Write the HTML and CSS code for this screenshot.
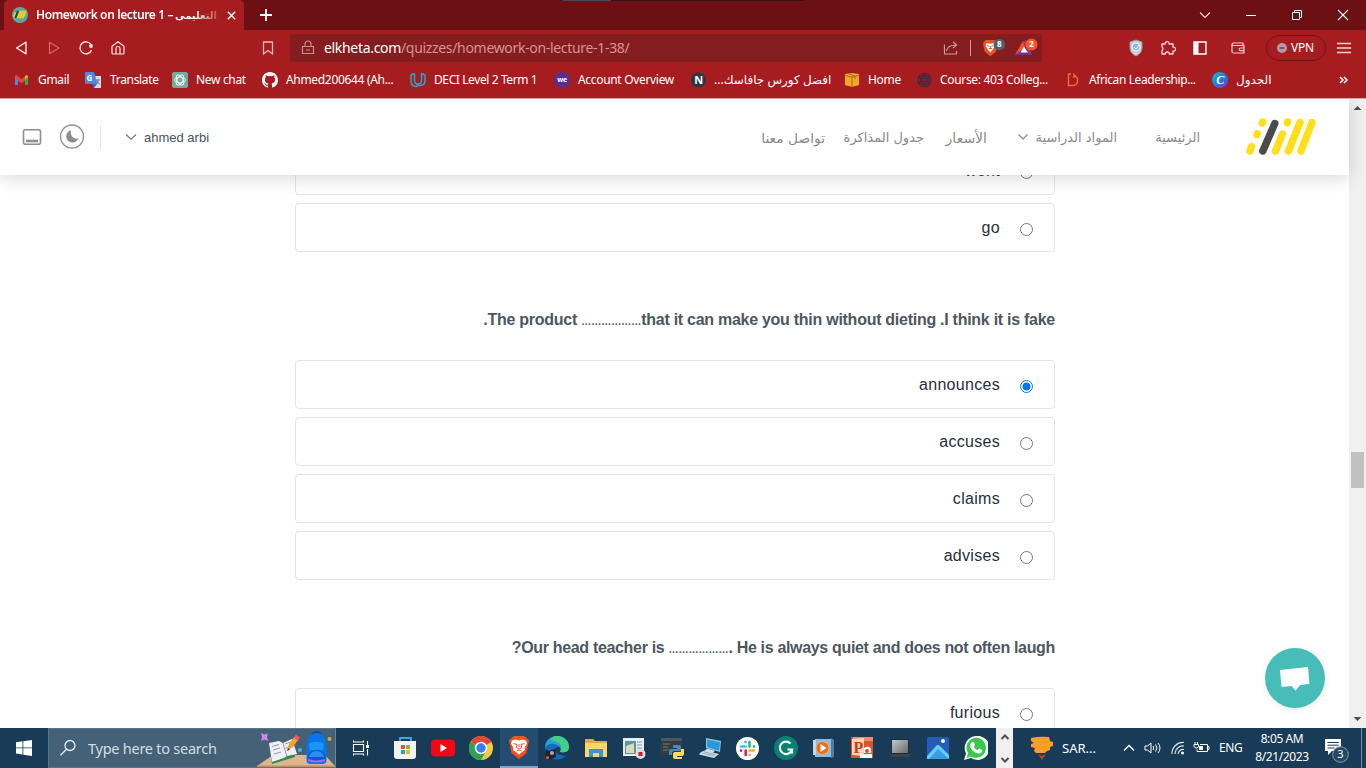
FILE: index.html
```html
<!DOCTYPE html>
<html lang="en">
<head>
<meta charset="utf-8">
<title>Homework on lecture 1</title>
<link rel="stylesheet" href="styles.css">
</head>
<body>
<div class="titlebar">
  <div class="tab">
    <svg width="16" height="16" viewBox="0 0 16 16"><circle cx="8" cy="8" r="8" fill="#58aaa0"/><g stroke-width="2" stroke-linecap="round"><path d="M3 6.500L2 9M8.500 4.500l-2.600 6M11 4.500l-2.600 6M13.500 4.500l-2.600 6" stroke="#e9d32b"/><path d="M5.800 4.500L3.800 10" stroke="#373b32"/></g></svg>
    <span class="tab-title">Homework on lecture 1 – <bdi class="tab-ar">التعليمى</bdi></span>
    <svg class="tab-close" width="9" height="9" viewBox="0 0 9 9"><path d="M.8.8l7.400 7.400M8.200.8L.8 8.200" stroke="#fff" stroke-width="1.400"/></svg>
  </div>
  <svg class="plus" width="12" height="12" viewBox="0 0 12 12"><path d="M6 0v12M0 6h12" stroke="#fff" stroke-width="1.800"/></svg>
  <div class="strip"></div>
  <div class="winbtns">
    <svg width="12" height="12" viewBox="0 0 12 12"><path d="M1 3.500l5 5 5-5" fill="none" stroke="#f0dcdc" stroke-width="1.100"/></svg>
    <svg width="12" height="12" viewBox="0 0 12 12"><path d="M1 6.500h10" stroke="#fff"/></svg>
    <svg width="12" height="12" viewBox="0 0 12 12"><path d="M1.500 3.500h7v7h-7zM3.500 3.500v-2h7v7h-2" fill="none" stroke="#fff"/></svg>
    <svg width="12" height="12" viewBox="0 0 12 12"><path d="M1 1l10 10M11 1L1 11" stroke="#fff" stroke-width="1.100"/></svg>
  </div>
</div>

<div class="toolbar">
  <span class="slot"><svg width="16" height="16" viewBox="0 0 16 16"><path d="M12 2.200v11.600L2.600 8z" fill="none" stroke="#f8e4e4" stroke-width="1.400" stroke-linejoin="round"/></svg></span>
  <span class="slot"><svg width="16" height="16" viewBox="0 0 16 16"><path d="M3.500 2.200v11.600L13 8z" fill="none" stroke="#d4686b" stroke-width="1.200" stroke-linejoin="round"/></svg></span>
  <span class="slot"><svg width="16" height="16" viewBox="0 0 16 16"><path d="M13 4.500A6 6 0 1 0 13.600 10" fill="none" stroke="#f8e4e4" stroke-width="1.400"/><circle cx="13" cy="6" r="1.900" fill="#f8e4e4"/></svg></span>
  <span class="slot"><svg width="16" height="16" viewBox="0 0 16 16"><path d="M2 6.200L8 1.800l6 4.400V13a1 1 0 0 1-1 1H3a1 1 0 0 1-1-1zM6 14V8.500a2 2 0 0 1 4 0V14" fill="none" stroke="#f8e4e4" stroke-width="1.200"/></svg></span>
  <span class="slot bm"><svg width="16" height="16" viewBox="0 0 16 16"><path d="M3.500 2h9v12L8 10.500 3.500 14z" fill="none" stroke="#efb9ba" stroke-width="1.300" stroke-linejoin="round"/></svg></span>
  <div class="address">
    <svg width="14" height="16" viewBox="0 0 14 16"><path d="M1.500 6.500h11v7h-11zM4 6.500V4a3 3 0 0 1 6 0v2.500M5 10h4" fill="none" stroke="#c28f90" stroke-width="1.200"/></svg>
    <span class="url">elkheta.com<span class="path">/quizzes/homework-on-lecture-1-38/</span></span>
    <svg class="share" width="16" height="16" viewBox="0 0 16 16"><path d="M1.500 4.500v9.500h12v-3M3.500 11c.8-4 3.500-6 9.500-6M10 1.800L13.500 5 10 8" fill="none" stroke="#c99a9b" stroke-width="1.200"/></svg>
    <i class="sep"></i>
    <svg class="lion" width="24" height="20" viewBox="0 0 24 20"><path d="M3.500 2h9l3 2.500-1.500 9-5.700 4.700-5.800-4.700L1 5z" fill="#f0501f"/><path d="M4.500 5l3 .8h1.400l3-.8 1 2.400-2 4-2.600 2.800L5.600 11.400l-2-4z" fill="#fff"/><path d="M5 7.500l2 .8M11.300 7.500l-2 .8M6.800 10.500h3M8.300 8v2" stroke="#f0501f"/><circle cx="17.300" cy="6.500" r="5.800" fill="#4f616d"/><text x="17.300" y="9" text-anchor="middle" class="badge">8</text></svg>
    <svg class="bat" width="25" height="20" viewBox="0 0 25 20"><path d="M8 3L0 17h6l4-8z" fill="#f4532b"/><path d="M0 17h17l-3-5H7z" fill="#63329e"/><path d="M8 3l3-.5L17 17l-4-3z" fill="#983b78"/><path d="M9 8.500l4 6H5.500z" fill="#fff"/><circle cx="16.500" cy="6.500" r="6" fill="#fb542b"/><text x="16.500" y="9" text-anchor="middle" class="badge">2</text></svg>
  </div>
  <span class="slot shield"><svg width="16" height="18" viewBox="0 0 16 18"><path d="M8 1l6 2v6c0 4-3 6.500-6 8-3-1.500-6-4-6-8V3z" fill="#c9d2d8" stroke="#8a979f"/><circle cx="8" cy="8" r="4" fill="#8fb4cf" stroke="#eef4f8"/><path d="M6 8l2 2 3-4" fill="none" stroke="#fff"/></svg></span>
  <span class="slot"><svg width="16" height="16" viewBox="0 0 16 16"><path d="M2 4h3.200a2 2 0 1 1 3.900 0H13v3.200a2 2 0 1 1 0 3.800v3H9.300a2 2 0 0 0-4 0H2v-3.500a2 2 0 0 0 0-3.500z" fill="none" stroke="#f4d9da" stroke-width="1.300" stroke-linejoin="round"/></svg></span>
  <span class="slot"><svg width="16" height="16" viewBox="0 0 16 16"><path d="M2 2h12v12H2z" fill="none" stroke="#fff" stroke-width="1.400"/><path d="M2 2h4.500v12H2z" fill="#fff"/></svg></span>
  <span class="slot wallet"><svg width="16" height="16" viewBox="0 0 16 16"><path d="M13 5.500V3H3.500a1.500 1.500 0 0 0-1.500 1.300v7.200A1.500 1.500 0 0 0 3.500 13H14V5.500H3.500A1.500 1.500 0 0 1 2 4.300M14 8h-3.500a1.300 1.300 0 0 0 0 2.600H14" fill="none" stroke="#f2cdce" stroke-width="1.200"/></svg></span>
  <div class="vpn"><svg width="10" height="10" viewBox="0 0 10 10"><circle cx="5" cy="5" r="5" fill="#b49ba9"/><path d="M2.500 5h5" stroke="#69455b" stroke-width="1.500"/></svg><span>VPN</span></div>
  <span class="slot menu"><svg width="14" height="14" viewBox="0 0 14 14"><path d="M0 2.500h14M0 7h14M0 11.500h14" stroke="#f2d9da" stroke-width="1.300"/></svg></span>
</div>

<div class="bookmarks">
  <div class="b"><svg width="16" height="16" viewBox="0 0 16 16"><path d="M1 3.500L2.500 3l5 4 5-4 1.500.5v3l-6.500 5L1 6.500z" fill="#e94435"/><path d="M1 5v8h3V7.500z" fill="#4f83e8"/><path d="M11 7.500V13h3V5z" fill="#35a653"/><path d="M11 7.500V4.500l1.500-1.500L14 4.500V5z" fill="#f4b912"/></svg><span>Gmail</span></div>
  <div class="b"><svg width="17" height="16" viewBox="0 0 17 16"><path d="M7 4h9v12H9z" fill="#d9dbe0"/><path d="M0 0h9l3.500 12H1a1 1 0 0 1-1-1z" fill="#4a86e8"/><path d="M7 12h5l-3 4z" fill="#3367c8"/><text x="1.500" y="9" class="ic8">G</text><path d="M11 8h4M13 7v1c0 2-1 4-2 4M12 9l3 3.500" stroke="#667" fill="none" stroke-width=".8"/></svg><span>Translate</span></div>
  <div class="b"><svg width="16" height="16" viewBox="0 0 16 16"><rect width="16" height="16" rx="2" fill="#74aa9c"/><g fill="none" stroke="#e8f6f2" stroke-width=".9"><ellipse cx="8" cy="8" rx="5.500" ry="2.800"/><ellipse cx="8" cy="8" rx="5.500" ry="2.800" transform="rotate(60 8 8)"/><ellipse cx="8" cy="8" rx="5.500" ry="2.800" transform="rotate(120 8 8)"/></g></svg><span>New chat</span></div>
  <div class="b"><svg width="16" height="16" viewBox="0 0 16 16"><path fill="#fff" d="M8 0C3.580 0 0 3.580 0 8c0 3.540 2.290 6.530 5.470 7.590.4.070.55-.17.55-.38v-1.490c-2.230.48-2.700-.94-2.700-.94-.36-.92-.89-1.170-.89-1.170-.73-.5.050-.49.050-.49.810.060 1.230.83 1.230.83.720 1.230 1.880.87 2.340.67.070-.52.28-.87.510-1.070-1.780-.2-3.640-.89-3.640-3.950 0-.87.310-1.590.82-2.150-.080-.2-.36-1.020.080-2.120 0 0 .67-.21 2.200.82a7.600 7.600 0 0 1 4 0c1.530-1.040 2.200-.82 2.200-.82.440 1.100.16 1.920.080 2.120.51.560.82 1.270.82 2.150 0 3.070-1.870 3.750-3.650 3.950.29.250.54.730.54 1.480v2.190c0 .21.150.46.550.38A8 8 0 0 0 16 8c0-4.420-3.580-8-8-8z"/></svg><span>Ahmed200644 (Ah...</span></div>
  <div class="b"><svg width="16" height="16" viewBox="0 0 16 16"><path d="M4.500 1.500L1 3v5.500c0 3.500 1.500 5.800 4.500 6 1 0 1.800-.3 2.500-1M4.500 1.500v7c0 2 1.300 3.500 3.500 3.500s3.500-1.500 3.500-3.500v-7L15 3v5.500c0 3.500-2.500 5-5 5S6.500 12 6.500 12" fill="none" stroke="#26a5cf" stroke-width="1.500" stroke-linejoin="round"/></svg><span class="t5">DECI Level 2 Term 1</span></div>
  <div class="b"><svg width="16" height="16" viewBox="0 0 16 16"><circle cx="8" cy="8" r="8" fill="#5a2d91"/><text x="8" y="10.300" text-anchor="middle" class="ic7">we</text></svg><span>Account Overview</span></div>
  <div class="b"><svg width="15" height="16" viewBox="0 0 15 16"><circle cx="7.500" cy="8" r="7.500" fill="#273948"/><text x="7.500" y="12" text-anchor="middle" class="ic11">N</text></svg><bdi class="ar" dir="rtl">افضل كورس جافاسك...</bdi></div>
  <div class="b"><svg width="15" height="16" viewBox="0 0 15 16"><path d="M0 2l7-1 7 1v11l-7 2-7-2z" fill="#f3a62b"/><path d="M0 3.500l7 1.500 7-1.500M7 5v10M3 1.500l7 2.500v3" fill="none" stroke="#a76512" stroke-width=".9"/></svg><span>Home</span></div>
  <div class="b"><svg width="15" height="16" viewBox="0 0 16 16"><g stroke="#3a2a4a" stroke-width="1.300" fill="none"><circle cx="8" cy="8" r="7"/><circle cx="8" cy="8" r="2.200"/><circle cx="8" cy="8" r="4.600"/><path d="M8 1v4.500M8 10.500V15M2 4.500l4 2.300M10 9.200l4 2.300M2 11.500l4-2.300M10 6.800l4-2.300"/></g></svg><span>Course: 403 Colleg...</span></div>
  <div class="b"><svg width="15" height="16" viewBox="0 0 15 16"><path d="M5 2H2.500v11.500H7c3.500 0 4.500-1.500 4.500-4.500V6.500L8 2.500V6" fill="none" stroke="#fa653e" stroke-width="1.400"/></svg><span class="t10">African Leadership...</span></div>
  <div class="b"><svg width="16" height="16" viewBox="0 0 16 16"><defs><linearGradient id="cv" x1="0" y1="0" x2="1" y2="1"><stop offset="0" stop-color="#07bfd0"/><stop offset=".5" stop-color="#247de0"/><stop offset="1" stop-color="#7430dc"/></linearGradient></defs><circle cx="8" cy="8" r="8" fill="url(#cv)"/><text x="8" y="12.300" text-anchor="middle" class="canva">C</text></svg><bdi class="ar">الجدول</bdi></div>
  <svg class="more" width="9" height="8" viewBox="0 0 9 8"><path d="M1 1l3 3-3 3M5 1l3 3-3 3" fill="none" stroke="#fff" stroke-width="1.500"/></svg>
</div>

<div class="viewport">
  <header class="site-header">
    <svg width="20" height="18" viewBox="0 0 20 18"><rect x="1.500" y="1.700" width="17" height="14.500" rx="2" fill="none" stroke="#8e8e8e" stroke-width="1.600"/><path d="M4 13h12" stroke="#8e8e8e" stroke-width="2.600"/></svg>
    <svg class="moon" width="26" height="26" viewBox="0 0 26 26"><circle cx="13" cy="12.500" r="11.500" fill="none" stroke="#929292" stroke-width="1.400"/><path d="M12 6.300a6.200 6.200 0 1 0 7.300 8c-2 .8-4.300.3-5.700-1.200-1.600-1.700-2.200-4.300-1.600-6.800z" fill="#8e8e8e"/></svg>
    <i class="vline"></i>
    <svg class="chev" width="12" height="8" viewBox="0 0 12 8"><path d="M1 1.500l5 4.700 5-4.700" fill="none" stroke="#777" stroke-width="1.200"/></svg>
    <span class="user">ahmed arbi</span>
    <nav class="nav" dir="rtl">
      <svg class="logo" width="72" height="40" viewBox="0 0 72 40"><g stroke-width="7.400" stroke-linecap="round" stroke="#fedf19"><path d="M57 34L68 5.500M44.500 34L56 5.500M31.500 34L38.500 17M43.200 5.800l.4-1M6 34l1.600-4.500M13 17.700l.4-1M18.300 6l.4-1"/><path d="M18.800 34L30.800 6.500" stroke="#4b4b4b"/></g></svg>
      <a class="n1">الرئيسية</a>
      <a class="n2">المواد الدراسية</a>
      <svg class="navchev" width="12" height="8" viewBox="0 0 12 8"><path d="M1.500 1.500L6 6l4.500-4.500" fill="none" stroke="#888" stroke-width="1.200"/></svg>
      <a class="n3">الأسعار</a>
      <a class="n4">جدول المذاكرة</a>
      <a class="n5">تواصل معنا</a>
    </nav>
  </header>
  <main class="quiz" dir="rtl">
    <label class="option"><i class="radio"></i><span>went</span></label>
    <label class="option"><i class="radio"></i><span>go</span></label>
    <h3 class="question q1">The product <span class="dots">………………</span>that it can make you thin without dieting .I think it is fake.</h3>
    <label class="option"><i class="radio on"></i><span>announces</span></label>
    <label class="option"><i class="radio"></i><span>accuses</span></label>
    <label class="option"><i class="radio"></i><span>claims</span></label>
    <label class="option"><i class="radio"></i><span>advises</span></label>
    <h3 class="question q2">Our head teacher is <span class="dots">………………</span>. He is always quiet and does not often laugh?</h3>
    <label class="option"><i class="radio"></i><span>furious</span></label>
  </main>
  <div class="scrollbar">
    <svg width="17" height="17" viewBox="0 0 17 17"><path d="M4.500 11L8.500 7l4 4z" fill="#505050"/></svg>
    <i class="thumb"></i>
    <svg class="down" width="17" height="17" viewBox="0 0 17 17"><path d="M4.500 6l4 4 4-4z" fill="#505050"/></svg>
  </div>
  <div class="chat"><svg width="60" height="60" viewBox="0 0 60 60"><path d="M15 22l28-3 1.500 17-9.500 1-4.300 5.500L26.500 38 16.500 39z" fill="#fff"/></svg></div>
</div>

<div class="taskbar">
  <div class="start"><svg width="16" height="16" viewBox="0 0 16 16"><path d="M0 2.200L6.500 1.300v6.200H0zM7.300 1.200L16 0v7.500H7.300zM0 8.300h6.500v6.200L0 13.600zM7.300 8.300H16V16l-8.700-1.200z" fill="#fff"/></svg></div>
  <div class="search">
    <svg width="18" height="18" viewBox="0 0 18 18"><circle cx="11" cy="6.500" r="5" fill="none" stroke="#e9eef2" stroke-width="1.300"/><path d="M7.500 10.200L1.500 16.300" stroke="#e9eef2" stroke-width="1.300"/></svg>
    <span>Type here to search</span>
    <svg class="art" width="78" height="38" viewBox="0 0 78 38"><path d="M0 37l16-11h52l10 11z" fill="#ddb78c"/><path d="M0 36.500h78V38H0z" fill="#b99069"/><path d="M4 4l3.500 1.500L11 4.500 9.800 8l1.700 4-4-1.500L4 12l1-4z" fill="#cf87ed"/><path d="M12 15l3 20 23-7-2-14z" fill="#2f8b56"/><path d="M12 14l10-2 4 2 9-4 5 15-10 2-3 2-12 4z" fill="#f1eff4"/><path d="M26 14l4 14M15 17.500l7-2M16 21l7-2M17 25l7-2M28 15l6-2M29 19l6-2" stroke="#9398b2" fill="none"/><path d="M30 22l2-7 5-7 4 3-5 7z" fill="#f5a32b"/><path d="M36.500 8.500l2.500-3 4 3-2 3z" fill="#e75a62"/><path d="M30 22l1-3 2 1.500z" fill="#493b38"/><circle cx="43" cy="21" r="2" fill="#45b9dd"/><circle cx="72.500" cy="10" r="2" fill="#e5a523"/><path d="M55 6c1-4 8-4 9 0" fill="none" stroke="#124c9b" stroke-width="2"/><path d="M50 14c0-13 19-13 19 0l.5 17q0 4-4 4h-12q-4 0-4-4z" fill="#0874ea"/><path d="M52 15c2-3 13-3 15 0l-1 6H53z" fill="#1598f8"/><path d="M50.500 29c1-11 17-11 18 0v3h-18z" fill="#075acb"/><path d="M52 28c2-8 13-8 15 0z" fill="#2c8df5"/><path d="M51 31q8 3 17 0" stroke="#a668ee" stroke-width="2" fill="none"/></svg>
  </div>
  <div class="tv"><svg width="18" height="18" viewBox="0 0 18 18"><path d="M1.500 5.500h10v7h-10zM1.500 1.500V3h10V1.500M1.500 16.500V15h10v1.500M15.500 2v4M15.500 10v6.500" fill="none" stroke="#fff" stroke-width="1.100"/><path d="M14 6h3v3h-3z" fill="#fff"/></svg></div>
  <div class="apps">
    <span><svg width="24" height="24" viewBox="0 0 24 24"><path d="M7 6V2h11v4" fill="none" stroke="#38acd8" stroke-width="1.800"/><path d="M1 5h22v15q0 3-3 3H4q-3 0-3-3z" fill="#f1f3f4"/><path d="M8 9h4v4H8z" fill="#e65330"/><path d="M13 9h4v4h-4z" fill="#82b829"/><path d="M8 14h4v4H8z" fill="#299be0"/><path d="M13 14h4v4h-4z" fill="#f5b61b"/></svg></span>
    <span><svg width="24" height="24" viewBox="0 0 24 24"><rect y="3.500" width="24" height="17" rx="4" fill="#f30712"/><path d="M9.500 8l6.500 4-6.500 4z" fill="#fff"/></svg></span>
    <span><svg width="24" height="24" viewBox="0 0 24 24"><circle cx="12" cy="12" r="12" fill="#f3ca3f"/><path d="M12 12L1.600 6A12 12 0 0 1 22.400 6z" fill="#e64436"/><path d="M1.600 6A12 12 0 0 0 12 24l5.200-9-5.200-3z" fill="#2ba34f"/><circle cx="12" cy="12" r="5.500" fill="#3c7ff0" stroke="#fff" stroke-width="1.500"/></svg></span>
    <span class="active"><svg width="22" height="24" viewBox="0 0 22 24"><path d="M6 1h10l5 4-2.500 13-7.500 6-7.500-6L1 5z" fill="#f45022"/><path d="M4 5.500L8 4.500l3 1 3-1 4 1 1 3-2.500 4.500.5 2-3 2-3 2.500L8 17l-3-2 .5-2L3 8.500z" fill="#fff"/><path d="M5.500 8.500l3.500 1-.7 3L11 14l2.700-1.500-.7-3 3.500-1M8.500 16l2.500-1 2.500 1M11 9v3" fill="none" stroke="#f45022"/></svg></span>
    <span><svg width="26" height="24" viewBox="0 0 26 24"><path d="M1 13C0-4 25-4 25 11c0 5-5 6-9 5 3-4-3-8-8-7-4 1-6 3-7 4z" fill="#2d9fd8"/><path d="M10 0c11-1 15 6 15 11 0 5-5 6-9 5 3-6 1-10-10-12z" fill="#45cd85"/><path d="M1 12c3-6 12-5 14-1-5-1-8 8 7 9-8 7-21 3-21-8z" fill="#126cbb"/><path d="M2 13l3 2 6-2 1 8-7 3-4-4z" fill="#20242b"/><circle cx="8" cy="17" r="2" fill="#bca1a6"/><circle cx="3.500" cy="21.500" r="1.500" fill="#fa514f"/></svg></span>
    <span><svg width="22" height="20" viewBox="0 0 22 20"><path d="M0 1h8l2 2h12v15H0z" fill="#e6ac32"/><path d="M0 5h22v14H0z" fill="#fbd66b"/><path d="M4 11h14v8h-4v-4H8v4H4z" fill="#3c91d0"/></svg></span>
    <span><svg width="24" height="24" viewBox="0 0 24 24"><path d="M1 2h21v18H1z" fill="#e7edef"/><path d="M3 5h11v13H3z" fill="#5c93a1"/><path d="M4 10l8-3v10H4z" fill="#d5ddbd"/><path d="M15 6h5M15 9h5M15 12h5" stroke="#8997a5"/><circle cx="18.500" cy="18" r="5" fill="#ddd"/><rect x="16.500" y="16" width="4" height="4" fill="#c91c2b"/></svg></span>
    <span><svg width="24" height="24" viewBox="0 0 24 24"><path d="M1 2h21v17H1z" fill="#343b42"/><path d="M1 2h21v3H1z" fill="#4f575e"/><path d="M3 8h7M3 11h5M3 14h6" stroke="#69845d"/><path d="M14 9h5q2 0 2 2v4h-7q-2 0-2 2v2H9v-4q0-2 2-2h6v-1h-4v-2q0-1 1-1z" fill="#498bb8"/><path d="M21 13h3v5q0 2-2 2h-5v1h5v2h-7q-2 0-2-2v-3q0-2 2-2h6z" fill="#ffdf55"/></svg></span>
    <span><svg width="24" height="22" viewBox="0 0 24 22"><path d="M8 1l15 3-1 11-14-4z" fill="#8fc7e6"/><path d="M9 2.500l13 2.700-1 8.500L9 10z" fill="#299ad7"/><path d="M9 11.500l8 2.300-2 2-8-2zM3 15l4-1.500 14 3.500-5 4-15-3.500z" fill="#cfe0e7"/><path d="M4 16l12 3M6 14.800l12 3" stroke="#7f96a3" stroke-width=".7"/></svg></span>
    <span><svg width="23" height="23" viewBox="0 0 23 23"><circle cx="11.500" cy="11.500" r="11.500" fill="#fff"/><g stroke-width="2.600" stroke-linecap="round"><path d="M9.700 9.500H5M9.700 5h-.4" stroke="#36c5f0"/><path d="M13.500 5v4.600M18 9.600v-.3" stroke="#2eb67d"/><path d="M13.500 13.500H18M13.500 18h.3" stroke="#ecb22e"/><path d="M9.700 13.500V18M5 13.500v.3" stroke="#e01e5a"/></g></svg></span>
    <span><svg width="24" height="24" viewBox="0 0 24 24"><circle cx="12" cy="12" r="12" fill="#078272"/><path d="M16.500 7.500A6.200 6.200 0 1 0 18 13.500h-4.500M18 13.500v4" fill="none" stroke="#fff" stroke-width="2.200"/></svg></span>
    <span><svg width="22" height="22" viewBox="0 0 22 22"><path d="M2 2h18v18H2z" fill="#8ebddb"/><path d="M18 1l3 2v17l-3 1z" fill="#4b7fa8"/><path d="M0 3h3v15H0z" fill="#bedbea"/><circle cx="9.500" cy="11" r="6.500" fill="#ed6d1c" stroke="#f9b07b"/><path d="M7.500 7l6 4-6 4z" fill="#fff"/></svg></span>
    <span><svg width="24" height="24" viewBox="0 0 24 24"><path d="M1 1h22v21H1z" fill="#da532c"/><path d="M3 1h20v4H3z" fill="#f28c66"/><path d="M2 3l12-1v18L2 19z" fill="#f8d2bf"/><text x="3.500" y="17" class="ppt">P</text><path d="M14 12c5-3 8 0 7 5h-7zM10 18h12v4H10z" fill="#fff"/><circle cx="17" cy="15" r="2" fill="#d94827"/></svg></span>
    <span><svg width="24" height="22" viewBox="0 0 24 22"><defs><linearGradient id="gr" x2="1" y2="1"><stop stop-color="#c3c8ca"/><stop offset="1" stop-color="#666b6f"/></linearGradient></defs><path d="M3 2h18v15H3z" fill="#222b30"/><path d="M4 3h16v13H4z" fill="url(#gr)"/><path d="M1 17h22l-1 3H2z" fill="#394349"/></svg></span>
    <span><svg width="22" height="22" viewBox="0 0 22 22"><rect width="22" height="22" rx="2" fill="#245bbd"/><path d="M0 19L9 9q2-2 4 0l9 9v4H0z" fill="#62ccfa"/><path d="M2 22L11 12l11 10z" fill="#3c9be4"/><circle cx="16" cy="4" r="2" fill="#fff"/></svg></span>
    <span><svg width="24" height="24" viewBox="0 0 24 24"><path d="M12 0a12 12 0 1 1-5 22L0 24l2-6.500A12 12 0 0 1 12 0z" fill="#f5fff4"/><path d="M12 1.800a10 10 0 1 1-5 18.700L2.600 22 4 17A10 10 0 0 1 12 1.800z" fill="#38c84e"/><path d="M8 6l2 .2 1 3-1.200 1.500q1 2.300 3.800 3.500l1.600-1.600 3 1.400c0 5-6 4-9 1C5.500 11.500 5.500 8 8 6z" fill="#fff"/></svg></span>
  </div>
  <div class="miniscroll"><svg width="10" height="6" viewBox="0 0 10 6"><path d="M1.500 5L5 1.500 8.500 5" fill="none" stroke="#505050" stroke-width="2"/></svg><svg width="10" height="6" viewBox="0 0 10 6"><path d="M1.500 1L5 4.500 8.500 1" fill="none" stroke="#505050" stroke-width="2"/></svg></div>
  <div class="tray">
    <svg width="24" height="24" viewBox="0 0 24 24"><path d="M1 2q9-2 18-1l1 4 3 1v4l-3 1v3l-3 1-2 2H6l-2-2 1-3-4-1v-3l3-1-3-2z" fill="#f7a12c"/><path d="M3 6h16M6 11h13" stroke="#ee9522"/><path d="M8 18l4 2 4-2-4 6z" fill="#c74223"/></svg>
    <span class="sar">SAR...</span>
    <svg class="up" width="12" height="8" viewBox="0 0 12 8"><path d="M1 6.500l5-5 5 5" fill="none" stroke="#fff" stroke-width="1.300"/></svg>
    <svg class="vol" width="18" height="14" viewBox="0 0 18 14"><path d="M1 5h2.500L7 2v10L3.500 9H1zM9 5q1.500 2 0 4M11.500 3.500q3 3.500 0 7M14 2q4 5 0 10" fill="none" stroke="#fff"/></svg>
    <svg class="wifi" width="14" height="14" viewBox="0 0 14 14"><path d="M1 13A11 11 0 0 1 13 1.500M4 13a8 8 0 0 1 9-8M7 13a5 5 0 0 1 6-4.500" fill="none" stroke="#d7e0e6" stroke-width="1.200"/><circle cx="11.500" cy="12" r="1.500" fill="#fff"/></svg>
    <svg class="batt" width="17" height="14" viewBox="0 0 17 14"><path d="M7 3.500h7.500v7H4V8.500M14.500 5.500H16v3h-1.500M2 1v2M4.500 1v2M1 3.500h4.500v1.700q0 1.800-2.200 1.800T1 5.200z" fill="none" stroke="#fff"/><path d="M6 5h4v4H6z" fill="#fff"/></svg>
    <span class="eng">ENG</span>
    <div class="clock"><span>8:05 AM</span><span>8/21/2023</span></div>
    <svg class="note" width="26" height="26" viewBox="0 0 26 26"><path d="M1 1h16v12h-9l-4 4v-4H1z" fill="#fff"/><path d="M3.500 4.500h11M3.500 7.200h11M3.500 10h7" stroke="#183b57"/><circle cx="16.500" cy="16.500" r="7.800" fill="#244863" stroke="#8a9cac"/><text x="16.500" y="20.300" text-anchor="middle" class="count">3</text></svg>
  </div>
</div>
</body>
</html>
```
FILE: styles.css
```css
* { box-sizing: border-box; }
body { margin: 0; width: 1366px; height: 768px; overflow: hidden; background: #fff; font: 12px/16px "Noto Sans", "DejaVu Sans", sans-serif; color: #fff; }
svg { display: block; flex: none; }
i { display: block; }
span, a, bdi { white-space: nowrap; }

.titlebar { height: 30px; background: #6c1013; display: flex; align-items: center; padding-left: 4px; }
.tab { width: 240px; height: 30px; background: #a71c1f; border-radius: 5px 5px 0 0; display: flex; align-items: center; padding-left: 8px; }
.tab-title { width: 184px; margin-left: 8px; font-weight: 600; font-size: 12px; letter-spacing: -.38px; display: flex; gap: 2px; -webkit-mask-image: linear-gradient(90deg, #000 86%, rgba(0, 0, 0, .25) 98%); mask-image: linear-gradient(90deg, #000 86%, rgba(0, 0, 0, .25) 98%); }
.tab-ar { font-size: 10px; letter-spacing: 0; }
.tab-close { margin-left: 7px; }
.plus { margin-left: 16px; }
.strip { align-self: flex-start; margin-left: 291px; width: 242px; height: 1px; background: linear-gradient(90deg, #4a4767 20%, #3a1018 20%); }
.winbtns { margin-left: auto; display: flex; gap: 34px; padding-right: 17px; }

.toolbar { height: 36px; background: #a71c1f; display: flex; align-items: center; padding-left: 6px; }
.slot { width: 32px; display: flex; justify-content: center; flex: none; }
.bm { margin-left: 118px; margin-right: 6px; }
.address { width: 752px; height: 28px; border-radius: 3px; background: #831d20; display: flex; align-items: center; padding-left: 11px; flex: none; }
.url { margin-left: 9px; width: 619px; font-size: 14px; letter-spacing: -.32px; }
.path { color: #dc9192; }
.sep { width: 1px; height: 16px; background: #c9a0a0; margin-left: 11px; }
.lion { margin-left: 11px; }
.bat { margin-left: 9px; }
.badge { font: bold 8px "Noto Sans", sans-serif; fill: #fff; }
.shield { margin-left: 78px; }
.wallet { margin-left: 6px; }
.vpn { margin-left: 12px; width: 60px; height: 26px; border: 1px solid #741519; border-radius: 13px; display: flex; align-items: center; padding-left: 10px; gap: 4px; letter-spacing: -.2px; flex: none; }
.menu { margin-left: 2px; }

.bookmarks { height: 32px; background: #a71c1f; padding: 0 0 5px 14px; display: grid; grid-template-columns: 71px 87px 90px 148px 144px 137px 154px 72px 149px 146px 127px 10px; align-items: center; }
.b { display: flex; align-items: center; gap: 8px; letter-spacing: -.32px; }
.b .t5, .b .t10 { letter-spacing: -.4px; }
.b .ar { font-size: 12px; letter-spacing: 0; }
.ic8 { font: bold 8px "Noto Sans", sans-serif; fill: #fff; }
.ic7 { font: bold 7px "Noto Sans", sans-serif; fill: #fff; }
.ic11 { font: bold 11px "Noto Sans", sans-serif; fill: #fff; }
.canva { font: italic bold 12px "Liberation Serif", serif; fill: #fff; }

.viewport { position: relative; height: 630px; background: #fff; display: flex; border-top: 1px solid #d5a2a5; overflow: hidden; }
.site-header { position: absolute; left: 0; top: 0; width: 1349px; height: 76px; z-index: 2; background: #fff; box-shadow: 0 3px 16px rgba(60, 60, 90, .2); display: flex; align-items: center; padding-left: 22px; }
.moon { margin-left: 17px; }
.vline { width: 1px; height: 25px; background: #e3e3e3; margin-left: 15px; }
.chev { margin-left: 24px; }
.user { margin-left: 7px; padding-top: 2px; font: 13px/16px "Liberation Sans", sans-serif; color: #47525f; }
.nav { margin-left: auto; height: 76px; display: flex; align-items: center; padding-right: 33px; color: #8a8a8a; font: 13px/20px "DejaVu Sans", sans-serif; }
.nav a { display: block; flex: none; padding-top: 1px; }
.n1 { margin-right: 44px; width: 46px; }
.n2 { margin-right: 37px; width: 81px; }
.navchev { margin-right: 7px; }
.n3 { margin-right: 30px; width: 43px; font-size: 14px; }
.n4 { margin-right: 20px; width: 79px; }
.n5 { margin-right: 20px; width: 64px; font-size: 13.800px; }

.quiz { width: 1349px; padding: 47px 294px 0 295px; display: flex; flex-direction: column; gap: 8px; flex: none; }
.option { height: 49px; flex: none; border: 1px solid #e5e5e5; border-radius: 4px; display: flex; align-items: center; padding-right: 21px; gap: 20px; color: #252f3d; font: 16px/20px "Liberation Sans", sans-serif; letter-spacing: .3px; }
.option span { padding-top: 1px; }
.radio { width: 13px; height: 13px; border: 1px solid #767676; border-radius: 50%; margin-top: 4px; }
.radio.on { border-color: #0075ff; background: radial-gradient(circle, #0075ff 0 3.700px, #fff 4.300px); }
.question { margin: 0; height: 92px; flex: none; padding-top: 49px; color: #4d5761; font: bold 16px/22px "Liberation Sans", sans-serif; white-space: nowrap; }
.q1 { letter-spacing: -.27px; }
.q2 { letter-spacing: -.33px; }
.dots { font-size: 10px; line-height: 10px; letter-spacing: 0; }

.scrollbar { width: 17px; height: 629px; background: #f0f0f0; display: flex; flex-direction: column; align-items: center; flex: none; }
.thumb { width: 13px; height: 36px; background: #c1c1c1; margin-top: 336px; }
.down { margin-top: auto; }
.chat { position: absolute; left: 1265px; top: 549px; width: 60px; height: 60px; border-radius: 50%; background: #47bdb9; box-shadow: 0 2px 8px rgba(0, 0, 0, .08); }

.taskbar { height: 40px; background: #183b57; display: flex; }
.start { width: 48px; display: flex; align-items: center; justify-content: center; flex: none; }
.search { width: 288px; background: #456177; border: 1px solid #5c7487; border-right-color: #6c8292; display: flex; align-items: center; padding-left: 10px; color: #d3dde4; font-size: 14.500px; flex: none; }
.search span { margin-left: 11px; width: 161px; letter-spacing: -.25px; }
.art { margin-left: 9px; }
.tv { width: 49px; display: flex; align-items: center; justify-content: center; flex: none; }
.apps { width: 611px; display: flex; padding-left: 1px; flex: none; }
.apps span { width: 38.100px; display: flex; align-items: center; justify-content: center; flex: none; }
.apps .active { background: #234d70; border-bottom: 2px solid #7ba4c9; }
.ppt { font: bold 16px "Liberation Serif", serif; fill: #c83d14; }
.miniscroll { width: 17px; background: #f0f0f0; display: flex; flex-direction: column; align-items: center; justify-content: space-between; padding: 6px 0 5px; flex: none; }
.tray { width: 349px; border-right: 1px solid #75899a; display: flex; align-items: center; padding-left: 17px; font-size: 12px; flex: none; }
.sar { margin-left: 8px; width: 53px; font-size: 13px; }
.up { margin-left: 8px; }
.vol { margin-left: 9px; }
.wifi { margin-left: 9px; }
.batt { margin-left: 8px; }
.eng { margin-left: 9px; width: 26px; letter-spacing: -.4px; }
.clock { width: 56px; margin-left: 9px; display: flex; flex-direction: column; align-items: center; line-height: 18px; letter-spacing: -.4px; }
.note { margin-left: 14px; margin-top: 5px; }
.count { font: 11px "Noto Sans", sans-serif; fill: #fff; }
```
